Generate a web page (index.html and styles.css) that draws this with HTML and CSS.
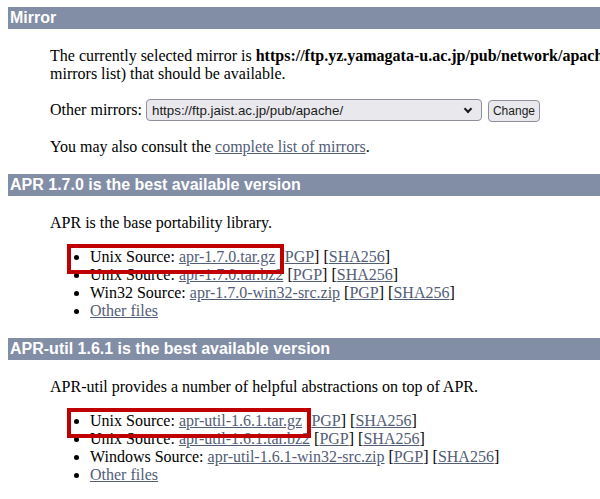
FILE: index.html
```html
<!DOCTYPE html>
<html lang="en">
<head>
    <meta charset="UTF-8">
    <meta name="viewport" content="width=device-width, initial-scale=1.0">
    <title>Download - The Apache Portable Runtime Project</title>
    <link rel="stylesheet" href="styles.css">
</head>
<body>
    <div class="page">
        <h1 class="section-title" id="mirror">Mirror</h1>
        <div class="section-content">
            <p class="mirror-intro">The currently selected mirror is <b>https://ftp.yz.yamagata-u.ac.jp/pub/network/apache/</b>. If you encounter a problem with this mirror, please select another mirror. If all mirrors are failing, there are <i>backup</i> mirrors (at the end of the<br>mirrors list) that should be available.</p>

            <form class="mirror-form" action="#" method="get">
                <p>Other mirrors:
                    <span class="select-wrap"><select name="Preferred" class="mirror-select">
                        <option value="https://ftp.jaist.ac.jp/pub/apache/" selected>https://ftp.jaist.ac.jp/pub/apache/</option>
                        <option value="https://ftp.yz.yamagata-u.ac.jp/pub/network/apache/">https://ftp.yz.yamagata-u.ac.jp/pub/network/apache/</option>
                        <option value="https://dlcdn.apache.org/">https://dlcdn.apache.org/</option>
                    </select></span>
                    <input type="submit" value="Change" class="btn-change">
                </p>
            </form>

            <p>You may also consult the <a href="#">complete list of mirrors</a>.</p>
        </div>

        <h1 class="section-title" id="apr1">APR 1.7.0 is the best available version</h1>
        <div class="section-content">
            <p>APR is the base portability library.</p>
            <ul>
                <li><span class="highlight">Unix Source: <a href="#">apr-1.7.0.tar.gz</a></span> [<a href="#">PGP</a>] [<a href="#">SHA256</a>]</li>
                <li>Unix Source: <a href="#">apr-1.7.0.tar.bz2</a> [<a href="#">PGP</a>] [<a href="#">SHA256</a>]</li>
                <li>Win32 Source: <a href="#">apr-1.7.0-win32-src.zip</a> [<a href="#">PGP</a>] [<a href="#">SHA256</a>]</li>
                <li><a href="#">Other files</a></li>
            </ul>
        </div>

        <h1 class="section-title" id="aprutil1">APR-util 1.6.1 is the best available version</h1>
        <div class="section-content">
            <p>APR-util provides a number of helpful abstractions on top of APR.</p>
            <ul>
                <li><span class="highlight">Unix Source: <a href="#">apr-util-1.6.1.tar.gz</a></span> [<a href="#">PGP</a>] [<a href="#">SHA256</a>]</li>
                <li>Unix Source: <a href="#">apr-util-1.6.1.tar.bz2</a> [<a href="#">PGP</a>] [<a href="#">SHA256</a>]</li>
                <li>Windows Source: <a href="#">apr-util-1.6.1-win32-src.zip</a> [<a href="#">PGP</a>] [<a href="#">SHA256</a>]</li>
                <li><a href="#">Other files</a></li>
            </ul>
        </div>
    </div>
</body>
</html>
```

FILE: styles.css
```css
body {
    margin: 7px 0 0 8px;
    background: #fff;
    color: #000;
    font-family: "Liberation Serif", "Times New Roman", serif;
    font-size: 16px;
    line-height: 18px;
}

/* the page is wider than the window: clip it at the right edge */
.page {
    overflow: hidden;
}

.section-title {
    margin: 0;
    padding: 2px 2px;
    background: #828da6;
    color: #fff;
    font-family: "Liberation Sans", Arial, sans-serif;
    font-size: 16px;
    font-weight: bold;
    line-height: 18px;
    white-space: nowrap;
}

.section-content {
    padding: 18px 0 18px 42px;
}

.section-content p,
.section-content ul {
    margin: 0 0 16px;
}

.section-content > :last-child {
    margin-bottom: 0;
}

.section-content ul {
    padding-left: 40px;
}

.mirror-intro {
    white-space: nowrap;
}

.mirror-form {
    margin: 0 0 16px;
}

.mirror-form p {
    margin: 0;
    white-space: nowrap;
}

a {
    color: #525d76;
}

/* select box with its own chevron */
.select-wrap {
    position: relative;
    display: inline-block;
}

.select-wrap::after {
    content: "";
    position: absolute;
    right: 11px;
    top: 7px;
    width: 4px;
    height: 4px;
    border-right: 2px solid #1b1b1b;
    border-bottom: 2px solid #1b1b1b;
    transform: rotate(45deg);
    pointer-events: none;
}

.mirror-select {
    appearance: none;
    width: 336px;
    height: 22px;
    padding: 0 22px 0 5px;
    background: #e9e9ed;
    color: #1b1b1b;
    border: 1px solid #8f8f9d;
    border-radius: 4px;
    font-family: "Liberation Sans", Arial, sans-serif;
    font-size: 13.33px;
}

.btn-change {
    appearance: none;
    width: 52px;
    height: 22px;
    margin: 0 0 0 2px;
    padding: 0;
    background: #e9e9ed;
    color: #1b1b1b;
    border: 1px solid #8f8f9d;
    border-radius: 4px;
    font-family: "Liberation Sans", Arial, sans-serif;
    font-size: 12px;
}

/* red marker round the tar.gz downloads */
.highlight {
    position: relative;
}

.highlight::after {
    content: "";
    position: absolute;
    top: -4px;
    left: -23px;
    right: -9px;
    height: 30px;
    border: 4px solid #c00000;
    box-sizing: border-box;
}
```
